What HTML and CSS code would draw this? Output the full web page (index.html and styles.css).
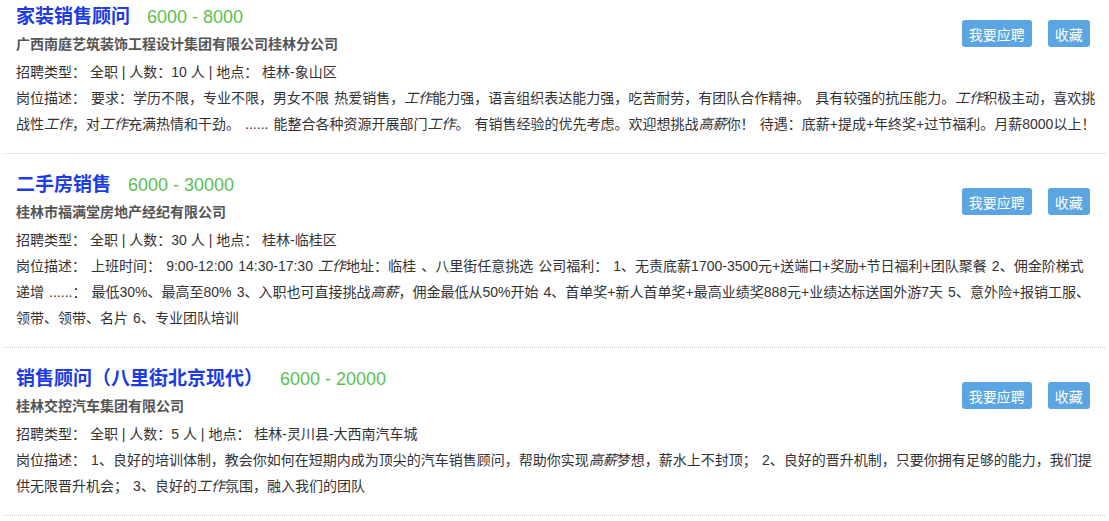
FILE: index.html
```html
<!DOCTYPE html>
<html lang="zh-CN">
<head>
    <meta charset="UTF-8">
    <meta name="viewport" content="width=device-width, initial-scale=1.0">
    <title>职位列表</title>
    <link rel="stylesheet" href="styles.css">
</head>
<body>
    <div class="job-list">
        <div class="job-item">
            <div class="job-head">
                <div class="job-info">
                    <h3 class="job-title"><a href="#">家装销售顾问</a><span class="salary">6000 - 8000</span></h3>
                    <p class="company">广西南庭艺筑装饰工程设计集团有限公司桂林分公司</p>
                    <p class="meta">招聘类型： 全职 | 人数：10 人 | 地点： 桂林-象山区</p>
                </div>
                <div class="actions">
                    <button class="btn">我要应聘</button>
                    <button class="btn">收藏</button>
                </div>
            </div>
            <p class="desc">岗位描述： 要求：学历不限，专业不限，男女不限 热爱销售，<em>工作</em>能力强，语言组织表达能力强，吃苦耐劳，有团队合作精神。 具有较强的抗压能力。<em>工作</em>积极主动，喜欢挑战性<em>工作</em>，对<em>工作</em>充满热情和干劲。 ...... 能整合各种资源开展部门<em>工作</em>。 有销售经验的优先考虑。欢迎想挑战<em>高薪</em>你！ 待遇：底薪+提成+年终奖+过节福利。月薪8000以上！</p>
        </div>

        <div class="job-item">
            <div class="job-head">
                <div class="job-info">
                    <h3 class="job-title"><a href="#">二手房销售</a><span class="salary">6000 - 30000</span></h3>
                    <p class="company">桂林市福满堂房地产经纪有限公司</p>
                    <p class="meta">招聘类型： 全职 | 人数：30 人 | 地点： 桂林-临桂区</p>
                </div>
                <div class="actions">
                    <button class="btn">我要应聘</button>
                    <button class="btn">收藏</button>
                </div>
            </div>
            <p class="desc">岗位描述： 上班时间： 9:00-12:00 14:30-17:30 <em>工作</em>地址：临桂 、八里街任意挑选 公司福利： 1、无责底薪1700-3500元+送端口+奖励+节日福利+团队聚餐 2、佣金阶梯式递增 ......： 最低30%、最高至80% 3、入职也可直接挑战<em>高薪</em>，佣金最低从50%开始 4、首单奖+新人首单奖+最高业绩奖888元+业绩达标送国外游7天 5、意外险+报销工服、领带、领带、名片 6、专业团队培训</p>
        </div>

        <div class="job-item">
            <div class="job-head">
                <div class="job-info">
                    <h3 class="job-title"><a href="#">销售顾问（八里街北京现代）</a><span class="salary">6000 - 20000</span></h3>
                    <p class="company">桂林交控汽车集团有限公司</p>
                    <p class="meta">招聘类型： 全职 | 人数：5 人 | 地点： 桂林-灵川县-大西南汽车城</p>
                </div>
                <div class="actions">
                    <button class="btn">我要应聘</button>
                    <button class="btn">收藏</button>
                </div>
            </div>
            <p class="desc">岗位描述： 1、良好的培训体制，教会你如何在短期内成为顶尖的汽车销售顾问，帮助你实现<em>高薪</em>梦想，薪水上不封顶； 2、良好的晋升机制，只要你拥有足够的能力，我们提供无限晋升机会； 3、良好的<em>工作</em>氛围，融入我们的团队</p>
        </div>
    </div>
</body>
</html>
```

FILE: styles.css
```css
* {
    margin: 0;
    padding: 0;
    box-sizing: border-box;
}

body {
    background-color: #fff;
    color: #333;
    font-family: "Microsoft YaHei", "Liberation Sans", "Noto Sans CJK SC", sans-serif;
    font-size: 14px;
    text-spacing-trim: space-all;
}

.job-list {
    margin: 0 4px;
}

.job-item {
    padding: 17px 9.2px 16px 12px;
    border-bottom: 1px dotted #c8c8c8;
}

.job-item:first-child {
    padding-top: 3px;
}

.job-head {
    display: flex;
    justify-content: space-between;
    align-items: flex-start;
}

.job-title {
    font-size: 19px;
    line-height: 28px;
    font-weight: bold;
}

.job-title a {
    color: #1a3be6;
    text-decoration: none;
}

.salary {
    margin-left: 17px;
    font-size: 18px;
    font-weight: normal;
    color: #5cbf4f;
}

.company {
    font-size: 14px;
    line-height: 26px;
    font-weight: bold;
    color: #555;
}

.meta {
    margin-top: 2px;
    line-height: 26px;
}

.actions {
    display: flex;
    gap: 16px;
    margin-top: 17px;
    margin-right: 6px;
}

.btn {
    height: 27px;
    padding: 0 7px;
    background-color: #5ba6e2;
    color: #fff;
    border: none;
    border-radius: 3px;
    font-family: inherit;
    font-size: 14px;
    cursor: pointer;
}

.btn:hover {
    background-color: #4a95d2;
}

.desc {
    line-height: 26px;
    word-spacing: 1.2px;
}

.desc em {
    font-style: italic;
}
```
